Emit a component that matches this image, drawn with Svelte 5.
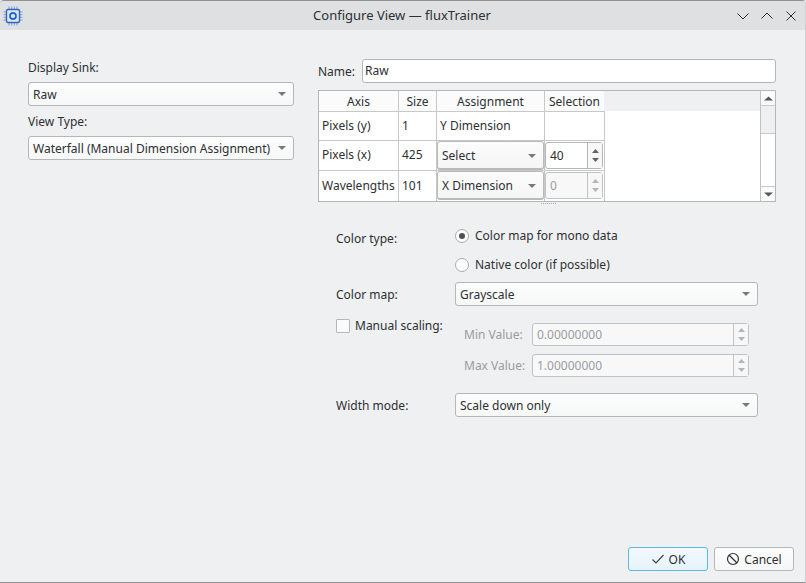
<script>
  const rows = [
    { axis: 'Pixels (y)', size: '1' },
    { axis: 'Pixels (x)', size: '425' },
    { axis: 'Wavelengths', size: '101' }
  ];
</script>

{#snippet arrow()}
  <svg class="arrow" width="8" height="4" viewBox="0 0 8 4"><path d="M0 0H8L4 4Z" /></svg>
{/snippet}

{#snippet spinBtns()}
  <span class="spin-btns">
    <svg width="7" height="4" viewBox="0 0 7 4"><path d="M0 4L3.500 0 7 4Z" /></svg>
    <svg width="7" height="4" viewBox="0 0 7 4"><path d="M0 0H7L3.500 4Z" /></svg>
  </span>
{/snippet}

<div class="window">
  <header class="titlebar">
    <svg class="appicon" width="20" height="20" viewBox="0 0 20 20" fill="none">
      <path d="M6 0.500v3M8.700 0.500v3M11.300 0.500v3M14 0.500v3M6 16.500v3M8.700 16.500v3M11.300 16.500v3M14 16.500v3M0.500 6h3M0.500 8.700h3M0.500 11.300h3M0.500 14h3M16.500 6h3M16.500 8.700h3M16.500 11.300h3M16.500 14h3" stroke="#7d9fd6" stroke-width="1"/>
      <rect x="3.500" y="3.500" width="13" height="13" rx="1.500" stroke="#2a66c8" stroke-width="1.400" fill="#e4e8ee"/>
      <circle cx="10" cy="10" r="3" stroke="#2a66c8" stroke-width="1.800"/>
    </svg>
    <span class="title">Configure View — fluxTrainer</span>
    <div class="wm">
      <svg width="14" height="14" viewBox="0 0 14 14"><path d="M1.500 4.500L7 10l5.500-5.500" /></svg>
      <svg width="14" height="14" viewBox="0 0 14 14"><path d="M1.500 9.500L7 4l5.500 5.500" /></svg>
      <svg width="14" height="14" viewBox="0 0 14 14"><path d="M2.500 2.500l9 9M11.500 2.500l-9 9" /></svg>
    </div>
  </header>

  <main class="content">
    <div class="columns">
      <section class="left">
        <div class="lbl first">Display Sink:</div>
        <div class="combo">Raw{@render arrow()}</div>
        <div class="lbl second">View Type:</div>
        <div class="combo">Waterfall (Manual Dimension Assignment){@render arrow()}</div>
      </section>

      <section class="right">
        <div class="name-row">
          <span>Name:</span>
          <div class="input">Raw</div>
        </div>

        <div class="table-wrap">
          <div class="table">
            <div class="thead">
              <div class="th c1">Axis</div>
              <div class="th c2">Size</div>
              <div class="th c3">Assignment</div>
              <div class="th c4">Selection</div>
            </div>
            <div class="tr r0">
              <div class="td c1">{rows[0].axis}</div>
              <div class="td c2">{rows[0].size}</div>
              <div class="td c3">Y Dimension</div>
              <div class="td c4"></div>
            </div>
            <div class="tr r1">
              <div class="td c1">{rows[1].axis}</div>
              <div class="td c2">{rows[1].size}</div>
              <div class="td c3 w"><div class="combo cell">Select{@render arrow()}</div></div>
              <div class="td c4 w"><div class="spin cell"><span class="val">40</span>{@render spinBtns()}</div></div>
            </div>
            <div class="tr r2">
              <div class="td c1">{rows[2].axis}</div>
              <div class="td c2">{rows[2].size}</div>
              <div class="td c3 w"><div class="combo cell">X Dimension{@render arrow()}</div></div>
              <div class="td c4 w"><div class="spin cell disabled"><span class="val">0</span>{@render spinBtns()}</div></div>
            </div>
          </div>
          <div class="scrollbar">
            <div class="sb-btn top"><svg width="9" height="5" viewBox="0 0 9 5"><path d="M0 4.500L4.500 0.500 9 4.500Z" /></svg></div>
            <div class="sb-track"><div class="sb-thumb"></div></div>
            <div class="sb-btn bottom"><svg width="9" height="5" viewBox="0 0 9 5"><path d="M0 0.500H9L4.500 4.500Z" /></svg></div>
          </div>
        </div>
        <div class="splitter"></div>

        <div class="form">
          <div class="f-label ct">Color type:</div>
          <div class="radios">
            <div class="radio-row"><span class="radio on"></span>Color map for mono data</div>
            <div class="radio-row"><span class="radio"></span>Native color (if possible)</div>
          </div>

          <div class="f-label cm">Color map:</div>
          <div class="combo cm-combo">Grayscale{@render arrow()}</div>

          <div class="manual">
            <div class="check-row"><span class="check"></span>Manual scaling:</div>
            <div class="range">
              <span class="range-label">Min Value:</span>
              <div class="spin big disabled"><span class="val">0.00000000</span>{@render spinBtns()}</div>
              <span class="range-label">Max Value:</span>
              <div class="spin big disabled"><span class="val">1.00000000</span>{@render spinBtns()}</div>
            </div>
          </div>

          <div class="f-label wm-label">Width mode:</div>
          <div class="combo wm-combo">Scale down only{@render arrow()}</div>
        </div>
      </section>
    </div>

    <footer class="buttons">
      <div class="btn default">
        <svg width="14" height="14" viewBox="0 0 14 14" fill="none"><path d="M1.500 7.500L5 11 12.500 3" stroke="#3a3d40" stroke-width="1.100"/></svg>
        OK
      </div>
      <div class="btn">
        <svg width="14" height="14" viewBox="0 0 14 14" fill="none"><circle cx="7" cy="7" r="5.500" stroke="#2f3133" stroke-width="1.200"/><path d="M3 3l8 8" stroke="#2f3133" stroke-width="1.200"/></svg>
        Cancel
      </div>
    </footer>
  </main>
</div>

<style>
  :global(body) { margin: 0; background: #eff0f1; }
  .window {
    box-sizing: border-box;
    width: 806px;
    height: 583px;
    display: flex;
    flex-direction: column;
    background: #eff0f1;
    border-top: 1px solid #8f9193;
    border-right: 1px solid #cfd0d2;
    border-bottom: 1px solid #8f9193;
    border-radius: 4px 4px 0 0;
    overflow: hidden;
    font-family: "Noto Sans", sans-serif;
    font-size: 12px;
    color: #2d3033;
  }
  .titlebar {
    height: 29px;
    flex: none;
    background: #dee0e2;
    display: flex;
    align-items: center;
    padding: 0 7px 0 3px;
  }
  .appicon { flex: none; }
  .title {
    flex: 1;
    text-align: center;
    font-size: 13px;
    color: #2d3033;
    padding-left: 45px;
    padding-bottom: 2px;
  }
  .wm { display: flex; gap: 10px; }
  .wm svg path { fill: none; stroke: #2d3033; stroke-width: 1; }

  .content {
    flex: 1;
    display: flex;
    flex-direction: column;
    padding: 0 11px 11px 28px;
    min-height: 0;
  }
  .columns { flex: 1; display: flex; gap: 24px; padding-right: 18px; }
  .left { width: 266px; flex: none; display: flex; flex-direction: column; }
  .lbl { line-height: 17px; }
  .lbl.first { margin-top: 29px; margin-bottom: 6px; }
  .lbl.second { margin-top: 7px; margin-bottom: 6px; }

  .combo {
    box-sizing: border-box;
    height: 24px;
    display: flex;
    align-items: center;
    justify-content: space-between;
    padding: 0 7px 0 4px;
    background: linear-gradient(#fdfdfd, #f6f7f7);
    border: 1px solid #b4b6b8;
    border-radius: 3px;
    white-space: nowrap;
  }
  .arrow { flex: none; margin-left: 4px; }
  .arrow path { fill: #77797c; }

  .right { flex: 1; display: flex; flex-direction: column; min-width: 0; }
  .name-row { display: flex; align-items: center; gap: 7px; margin-top: 29px; }
  .input {
    box-sizing: border-box;
    flex: 1;
    height: 24px;
    line-height: 22px;
    padding: 0 2px;
    background: #fff;
    border: 1px solid #b4b6b8;
    border-radius: 3px;
  }

  .table-wrap {
    box-sizing: border-box;
    margin-top: 7px;
    height: 112px;
    display: flex;
    background: #fff;
    border: 1px solid #b4b6b8;
  }
  .table { flex: 1; display: flex; flex-direction: column; min-width: 0; }
  .thead { display: flex; height: 20px; background: #eff0f1; }
  .th {
    box-sizing: border-box;
    background: #fbfbfb;
    text-align: center;
    line-height: 21px;
    border-right: 1px solid #c6c8ca;
  }
  .th.c4 { border-right: none; width: 59px; }
  .tr { display: flex; height: 30px; }
  .r0 { box-sizing: border-box; border-top: 1px solid #c6c8ca; width: 286px; }
  .td {
    box-sizing: border-box;
    border-right: 1px solid #c6c8ca;
    border-bottom: 1px solid #c6c8ca;
    padding: 0 3px;
    line-height: 28px;
    white-space: nowrap;
    overflow: hidden;
  }
  .c1 { width: 80px; flex: none; }
  .c2 { width: 38px; flex: none; }
  .c3 { width: 108px; flex: none; }
  .c4 { width: 60px; flex: none; }
  .td.w { padding: 0; display: flex; overflow: visible; }
  .r2 .td { border-bottom: none; line-height: 30px; }
  .combo.cell {
    width: 107px;
    height: 29px;
    padding: 1px 7px 0 4px;
    background: linear-gradient(#fcfcfc, #f5f5f6);
    border: 1px solid #b8babc;
    border-bottom-width: 2px;
    border-radius: 3px;
  }
  .spin.cell { width: 58px; height: 27px; margin-top: 1px; border-radius: 3px; }

  .spin {
    box-sizing: border-box;
    display: flex;
    align-items: stretch;
    background: #fff;
    border: 1px solid #b4b6b8;
    border-radius: 3px;
  }
  .spin .val { flex: 1; padding-left: 4px; line-height: 26px; }
  .spin-btns {
    width: 14px;
    flex: none;
    border-left: 1px solid #b4b6b8;
    display: flex;
    flex-direction: column;
    align-items: center;
    justify-content: center;
    gap: 5px;
    background: #f7f7f8;
  }
  .spin-btns path { fill: #626466; }
  .spin.disabled { background: #f8f8f9; border-color: #c0c2c4; color: #9a9c9e; }
  .spin.disabled .spin-btns { border-color: #c0c2c4; }
  .spin.disabled .spin-btns path { fill: #b3b5b7; }
  .spin.big { height: 23px; }
  .spin.big .val { line-height: 21px; }

  .scrollbar {
    width: 14px;
    flex: none;
    border-left: 1px solid #c0c2c4;
    display: flex;
    flex-direction: column;
    background: #fff;
  }
  .sb-btn {
    height: 14px;
    flex: none;
    display: flex;
    align-items: center;
    justify-content: center;
    background: #fbfbfb;
  }
  .sb-btn path { fill: #55585b; }
  .sb-btn.top { border-bottom: 1px solid #c6c8ca; }
  .sb-btn.bottom { border-top: 1px solid #c6c8ca; }
  .sb-track { flex: 1; }
  .sb-thumb { height: 27px; background: #eeeff0; border-bottom: 1px solid #c6c8ca; }

  .splitter {
    align-self: flex-start;
    margin: 1px 0 0 223px;
    width: 15px;
    height: 1px;
    border-top: 1px dotted #a9abad;
  }

  .form {
    margin: 16px 18px 0 18px;
    display: grid;
    grid-template-columns: 119px 303px;
    align-items: start;
  }
  .f-label { line-height: 17px; }
  .f-label.ct { margin-top: 9px; }
  .radios { display: flex; flex-direction: column; }
  .radio-row { display: flex; align-items: center; height: 29px; gap: 6px; }
  .radio {
    box-sizing: border-box;
    width: 14px;
    height: 14px;
    border: 1px solid #a9abad;
    border-radius: 50%;
    background: #fdfdfd;
    display: flex;
    align-items: center;
    justify-content: center;
  }
  .radio.on::after {
    content: "";
    width: 6px;
    height: 6px;
    border-radius: 50%;
    background: #4d4f52;
  }
  .f-label.cm { margin-top: 7px; }
  .cm-combo { margin-top: 3px; }

  .manual {
    grid-column: 1 / 3;
    display: flex;
    margin-top: 10px;
  }
  .check-row { width: 128px; flex: none; display: flex; gap: 5px; align-items: center; height: 17px; margin-top: 1px; white-space: nowrap; }
  .check {
    box-sizing: border-box;
    width: 14px;
    height: 14px;
    border: 1px solid #b4b6b8;
    border-radius: 1px;
    background: #fbfbfb;
    flex: none;
  }
  .range {
    display: grid;
    grid-template-columns: 68px 217px;
    row-gap: 8px;
    align-items: center;
    margin-top: 7px;
  }
  .range-label { color: #9a9c9e; }

  .f-label.wm-label { margin-top: 20px; }
  .wm-combo { margin-top: 16px; }

  .buttons {
    flex: none;
    display: flex;
    justify-content: flex-end;
    gap: 6px;
  }
  .btn {
    box-sizing: border-box;
    width: 80px;
    height: 24px;
    display: flex;
    align-items: center;
    justify-content: center;
    gap: 4px;
    background: linear-gradient(#fdfdfd, #f5f6f6);
    border: 1px solid #b4b6b8;
    border-radius: 3px;
  }
  .btn.default {
    background: linear-gradient(#f3f9fd, #e6f3fb);
    border-color: #5fb8e8;
  }
</style>
